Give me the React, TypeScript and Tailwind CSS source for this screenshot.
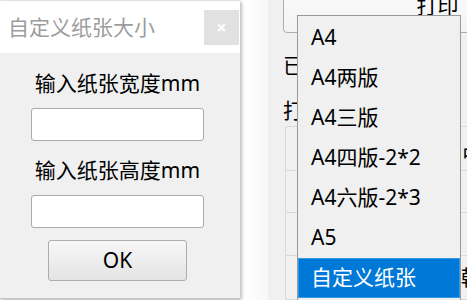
const FONT = { fontFamily: '"Noto Sans", "Noto Sans CJK SC", sans-serif' };

const SIZES = ["A4", "A4两版", "A4三版", "A4四版-2*2", "A4六版-2*3", "A5", "自定义纸张"];

function PaperDialog() {
  return (
    <div className="w-[240px] h-[298px] mt-[1px] shrink-0 flex flex-col bg-[#f0f0f0] border-b border-[#c8c8c8] shadow-[2px_1px_3px_rgba(0,0,0,0.25)] z-10">
      <div className="h-[52px] bg-white flex items-center justify-between pl-[8px]">
        <span className="text-[21px] leading-[28px] text-[#9c9c9c]">自定义纸张大小</span>
        <div className="w-[35px] h-[35px] bg-[#e1e1e1] flex items-center justify-center mr-[1px] text-white text-[18px] font-bold leading-none">
          ×
        </div>
      </div>
      <div className="flex flex-col items-center pr-[5px] pt-[16px]">
        <div className="text-[21px] leading-[28px] text-black">输入纸张宽度mm</div>
        <div className="mt-[11px] w-[173px] h-[33px] bg-white border border-[#ababab] rounded-[3px]" />
        <div className="mt-[15px] text-[21px] leading-[28px] text-black">输入纸张高度mm</div>
        <div className="mt-[11px] w-[173px] h-[33px] bg-white border border-[#ababab] rounded-[3px]" />
        <button className="mt-[12px] w-[139px] h-[41px] rounded-[3px] border border-[#adadad] bg-gradient-to-b from-[#f7f7f7] to-[#e4e4e4] text-[21px] leading-none text-black">
          OK
        </button>
      </div>
    </div>
  );
}

function PrintPanel() {
  return (
    <div className="flex-1 h-full bg-[#f0f0f0] overflow-hidden flex flex-col pl-[15px]">
      <div className="mt-[-22px] w-[309px] h-[55px] shrink-0 border border-[#adadad] rounded-[4px] bg-gradient-to-b from-[#fdfdfd] to-[#f3f3f3] flex items-center justify-center text-[21px] text-black">
        打印
      </div>
      <div className="mt-[18px] text-[21px] leading-[28px] text-black">已选择纸张</div>
      <div className="mt-[17px] text-[21px] leading-[28px] text-black">打印机</div>
      <div className="mt-[2px] ml-[2px] w-[300px] flex-1 border border-[#d9d9d9] rounded-tl-[3px] bg-[#f0f0f0]">
        <div className="h-[44px] border-b border-[#d9d9d9] flex items-center pl-[175px] text-[21px] text-black">占位</div>
        <div className="h-[42px] border-b border-[#d9d9d9]" />
        <div className="h-[43px] border-b border-[#d9d9d9]" />
        <div className="h-[43px] flex items-center pl-[175px] text-[21px] text-black">韩国</div>
      </div>
    </div>
  );
}

function SizeMenu() {
  return (
    <div className="absolute left-[297px] top-[15px] w-[164px] h-[290px] bg-[#f0f0f0] border border-[#9a9a9a] pt-[2px] z-20">
      {SIZES.map((s, i) => (
        <div
          key={s}
          className={
            i === SIZES.length - 1
              ? "h-[40px] flex items-center pl-[12px] text-[21px] text-white bg-[#0078d7] border border-[#2f9ae6]"
              : "h-[40px] flex items-center pl-[13px] text-[21px] text-black"
          }
        >
          {s}
        </div>
      ))}
    </div>
  );
}

export default function App() {
  return (
    <div className="relative w-[467px] h-[300px] overflow-hidden bg-[#ececec] flex" style={FONT}>
      <PaperDialog />
      <div className="w-[28px] h-full shrink-0 bg-gradient-to-r from-white to-[#f8f8f8]" />
      <PrintPanel />
      <SizeMenu />
    </div>
  );
}
